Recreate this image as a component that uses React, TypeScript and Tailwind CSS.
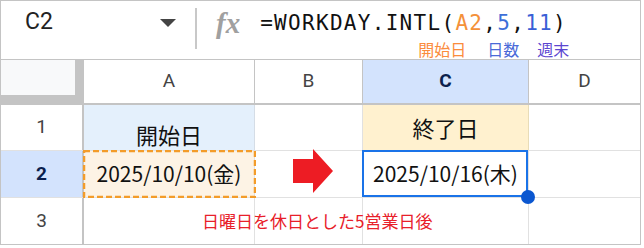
export default function App() {
  const head = "font-['Roboto',sans-serif] text-[19px] text-[#444]"
  const jp = "font-['Noto_Sans_CJK_JP','Noto_Sans',sans-serif]"

  return (
    <div className="w-[644px] h-[248px] bg-white">
      <div className="w-[641px] h-[245px] border border-[#c4c4c4] flex flex-col">
        {/* formula bar */}
        <div className="flex h-[59px] shrink-0 border-b border-[#c4c4c4]">
          <div className="flex w-[194px] items-start justify-between pl-[24px] pr-[19px] pt-[8px]">
            <span className="font-['Roboto',sans-serif] text-[23px] leading-[26px] text-[#222]">C2</span>
            <span className="mt-[10px] h-0 w-0 border-x-[8px] border-t-[8px] border-x-transparent border-t-[#444]" />
          </div>
          <div className="mt-[7px] h-[41px] w-[2px] bg-[#c8c8c8]" />
          <div className="ml-[19px] pt-[8px] font-['Liberation_Serif',serif] text-[29px] font-bold italic leading-[28px] text-[#a0a0a0]">
            fx
          </div>
          <div className="ml-[20px] flex flex-col pt-[9px]">
            <div className="font-['DejaVu_Sans_Mono',monospace] text-[21px] leading-[26px] tracking-[1.3px] text-[#111]">
              =WORKDAY.INTL(<span className="text-[#f4913a]">A2</span>,
              <span className="text-[#3d6fd8]">5</span>,<span className="text-[#3a5fd6]">11</span>)
            </div>
            <div className={`${jp} mt-[4px] flex text-[16px] leading-[18px]`}>
              <span className="ml-[158px] text-[#fb8c3c]">開始日</span>
              <span className="ml-[21px] text-[#4a6ad8]">日数</span>
              <span className="ml-[18px] text-[#5b46d0]">週末</span>
            </div>
          </div>
        </div>

        {/* column headers */}
        <div className="flex h-[45px] shrink-0 border-b-2 border-[#c4c4c4]">
          <div className="flex w-[83px] bg-[#c4c4c4]">
            <div className="h-[35px] w-[74px] bg-[#f8f9fa]" />
          </div>
          <div className={`${head} flex w-[171px] items-center justify-center border-r border-[#c4c4c4]`}>A</div>
          <div className={`${head} flex w-[108px] items-center justify-center border-r border-[#c4c4c4]`}>B</div>
          <div className="flex w-[166px] items-center justify-center border-r border-[#c4c4c4] bg-[#d3e3fd] font-['Roboto',sans-serif] text-[19px] font-bold text-[#0b1f4d]">
            C
          </div>
          <div className={`${head} flex flex-1 items-center justify-center`}>D</div>
        </div>

        {/* row 1 */}
        <div className="flex h-[46px] shrink-0 border-b border-[#e1e1e1]">
          <div className={`${head} flex w-[83px] items-center justify-center border-r-2 border-[#c4c4c4]`}>1</div>
          <div className={`${jp} flex w-[171px] items-end justify-center border-r border-[#d5dde6] bg-[#e4f0fc] pb-[3px] text-[22px] leading-[26px] text-[#111]`}>
            開始日
          </div>
          <div className="w-[108px] border-r border-[#e1e1e1]" />
          <div className={`${jp} flex w-[166px] items-center justify-center border-r border-[#e8dcb8] bg-[#fff1cf] pb-[2px] text-[22px] leading-[26px] text-[#111]`}>
            終了日
          </div>
          <div className="flex-1" />
        </div>

        {/* row 2 */}
        <div className="flex h-[47px] shrink-0 border-b border-[#e1e1e1]">
          <div className="flex w-[83px] items-center justify-center border-r-2 border-[#c4c4c4] bg-[#d3e3fd] font-['Roboto',sans-serif] text-[19px] font-bold text-[#0b1f4d]">
            2
          </div>
          <div className={`${jp} relative flex w-[171px] items-center justify-center border-r border-[#e1e1e1] bg-[#fdf3e5] text-[21px] text-[#111]`}>
            2025/10/10(金)
            <svg className="absolute left-[-1px] top-[-1px] h-[48px] w-[173px]" viewBox="0 0 173 48">
              <rect x="1" y="1" width="171" height="46" fill="none" stroke="#f39c2a" strokeWidth="2.5" strokeDasharray="6 3" />
            </svg>
          </div>
          <div className="flex w-[108px] items-start border-r border-[#e1e1e1] pl-[38px]">
            <svg className="-mt-[2px]" width="40" height="44" viewBox="0 0 40 44">
              <polygon points="0,10 20,10 20,0 40,22 20,44 20,34 0,34" fill="#ed1c24" />
            </svg>
          </div>
          <div className={`${jp} relative flex w-[166px] items-center justify-center border-r border-[#e1e1e1] text-[21px] text-[#111]`}>
            2025/10/16(木)
            <div className="absolute bottom-0 left-[-1px] right-0 top-[-1px] border-2 border-[#1a73e8]" />
            <div className="absolute bottom-[-7px] right-[-7px] h-[14px] w-[14px] rounded-full bg-[#0b57d0]" />
          </div>
          <div className="flex-1" />
        </div>

        {/* row 3 */}
        <div className="flex flex-1">
          <div className={`${head} flex w-[83px] items-center justify-center border-r-2 border-[#c4c4c4]`}>3</div>
          <div className="relative z-10 flex w-[171px] items-center border-r border-[#e1e1e1]">
            <span className={`${jp} ml-[118px] whitespace-nowrap text-[17px] text-[#e8202a]`}>
              日曜日を休日とした5営業日後
            </span>
          </div>
          <div className="w-[108px] border-r border-[#e1e1e1]" />
          <div className="w-[166px] border-r border-[#e1e1e1]" />
          <div className="flex-1" />
        </div>
      </div>
    </div>
  )
}
